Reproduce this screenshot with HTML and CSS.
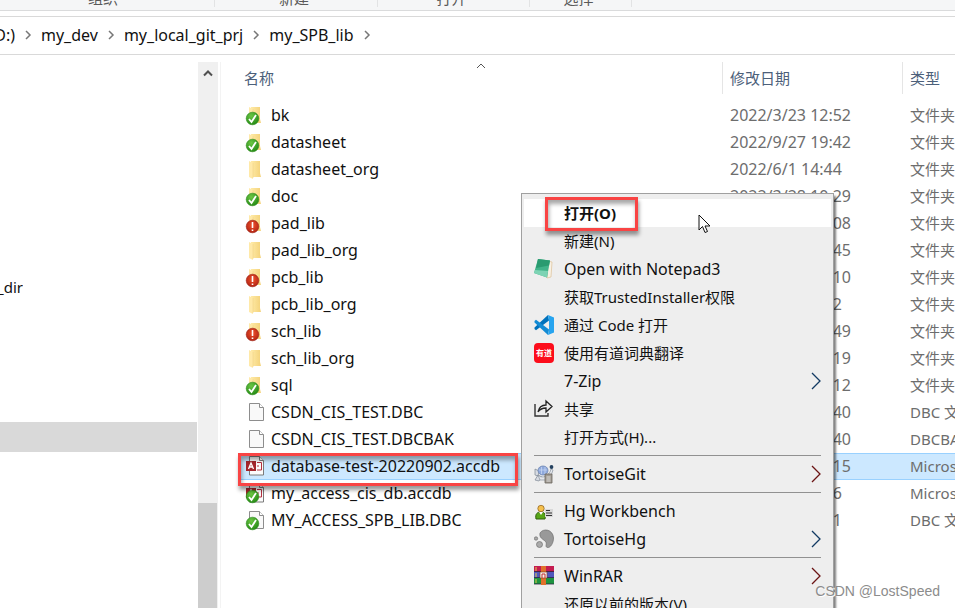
FILE: index.html
```html
<!DOCTYPE html>
<html lang="zh-CN">
<head>
    <meta charset="UTF-8">
    <meta name="viewport" content="width=device-width, initial-scale=1.0">
    <title>my_SPB_lib</title>
    <link rel="stylesheet" href="styles.css">
</head>
<body>
    <!-- shared icons -->
    <svg class="icon-defs" aria-hidden="true">
        <defs>
            <linearGradient id="folder-fill" x1="0" y1="0" x2="1" y2="0">
                <stop offset="0" stop-color="#ffeaa6"/>
                <stop offset="1" stop-color="#f3d27a"/>
            </linearGradient>
            <radialGradient id="green-fill" cx="0.4" cy="0.3" r="0.8">
                <stop offset="0" stop-color="#6cc644"/>
                <stop offset="1" stop-color="#1c8410"/>
            </radialGradient>
            <radialGradient id="red-fill" cx="0.5" cy="0.4" r="0.7">
                <stop offset="0" stop-color="#f0532c"/>
                <stop offset="1" stop-color="#a81c10"/>
            </radialGradient>
            <symbol id="folder" viewBox="0 0 24 27">
                <path d="M6 5h9v12l1 4H6z" fill="url(#folder-fill)"/>
                <path d="M4 5l4 2v16l-4-2z" fill="#ffe9a8"/>
                <path d="M8 7v15" stroke="#edcf7c" stroke-width="0.500"/>
            </symbol>
            <symbol id="page" viewBox="0 0 24 27">
                <path d="M4.500 4.500h10l4 4v13h-14z" fill="#f9f9f9" stroke="#8d8d8d"/>
                <path d="M14.500 4.500v4h4" fill="#fff" stroke="#8d8d8d"/>
            </symbol>
            <symbol id="access" viewBox="0 0 24 27">
                <path d="M4.500 3.500h10l4 4v14.500h-14z" fill="#fbfbfb" stroke="#7b7b7b"/>
                <path d="M14.500 3.500v4h4" fill="#fff" stroke="#7b7b7b"/>
                <path d="M12 9.500h4.500v7.500H12M12 13h2" fill="none" stroke="#b5303f"/>
                <path d="M1 8h10v10H1z" fill="#a4262c"/>
                <path d="M3.500 16L6 10l2.500 6M4.500 14h3" fill="none" stroke="#fff" stroke-width="1.300"/>
            </symbol>
            <symbol id="badge-ok" viewBox="0 0 24 27">
                <circle cx="7.500" cy="16.500" r="6.300" fill="url(#green-fill)" stroke="#2c8a1c" stroke-width="0.600"/>
                <path d="M4 17l2.500 3 4.500-7" fill="none" stroke="#fff" stroke-width="1.800"/>
            </symbol>
            <symbol id="badge-bad" viewBox="0 0 24 27">
                <circle cx="7.500" cy="16.500" r="6.300" fill="url(#red-fill)" stroke="#9c2016" stroke-width="0.600"/>
                <path d="M7.500 12v6M7.500 19.500v1.500" stroke="#fff" stroke-width="1.600"/>
            </symbol>
            <symbol id="chevron" viewBox="0 0 10 10">
                <path d="M3 1l4 4-4 4" fill="none" stroke="#777" stroke-width="1.500"/>
            </symbol>
            <symbol id="submenu" viewBox="0 0 10 18">
                <path d="M1 1l8 8-8 8" fill="none" stroke="currentColor" stroke-width="1.300"/>
            </symbol>
        </defs>
    </svg>

    <div class="ribbon">
        <div class="ribbon-group organize">组织</div>
        <div class="ribbon-group create">新建</div>
        <div class="ribbon-group open">打开</div>
        <div class="ribbon-group select">选择</div>
    </div>

    <nav class="address">
        <a class="drive" href="#">D:)</a>
        <svg class="chevron"><use href="#chevron"/></svg>
        <a href="#">my_dev</a>
        <svg class="chevron"><use href="#chevron"/></svg>
        <a href="#">my_local_git_prj</a>
        <svg class="chevron"><use href="#chevron"/></svg>
        <a href="#">my_SPB_lib</a>
        <svg class="chevron"><use href="#chevron"/></svg>
    </nav>

    <div class="explorer">
        <div class="tree">
            <a class="tree-item" href="#">_dir</a>
            <div class="tree-current"></div>
        </div>
        <div class="scrollbar">
            <svg class="scroll-up" viewBox="0 0 10 8"><path d="M1 6.500l4-4 4 4" fill="none" stroke="#505050" stroke-width="2"/></svg>
            <div class="thumb"></div>
        </div>

        <div class="files">
            <table class="file-table">
                <thead>
                    <tr>
                        <th class="col-name">
                            <div class="head">名称</div>
                            <svg class="sort" viewBox="0 0 10 6"><path d="M1 5l4-4 4 4" fill="none" stroke="#555"/></svg>
                        </th>
                        <th class="col-date"><div class="head">修改日期</div></th>
                        <th class="col-type"><div class="head">类型</div></th>
                    </tr>
                </thead>
                <tbody>
                    <tr>
                        <td><div class="name"><svg class="file-icon"><use href="#folder"/><use href="#badge-ok"/></svg>bk</div></td>
                        <td>2022/3/23 12:52</td>
                        <td>文件夹</td>
                    </tr>
                    <tr>
                        <td><div class="name"><svg class="file-icon"><use href="#folder"/><use href="#badge-ok"/></svg>datasheet</div></td>
                        <td>2022/9/27 19:42</td>
                        <td>文件夹</td>
                    </tr>
                    <tr>
                        <td><div class="name"><svg class="file-icon"><use href="#folder"/></svg>datasheet_org</div></td>
                        <td>2022/6/1 14:44</td>
                        <td>文件夹</td>
                    </tr>
                    <tr>
                        <td><div class="name"><svg class="file-icon"><use href="#folder"/><use href="#badge-ok"/></svg>doc</div></td>
                        <td>2022/3/28 10:29</td>
                        <td>文件夹</td>
                    </tr>
                    <tr>
                        <td><div class="name"><svg class="file-icon"><use href="#folder"/><use href="#badge-bad"/></svg>pad_lib</div></td>
                        <td>2022/9/27 20:08</td>
                        <td>文件夹</td>
                    </tr>
                    <tr>
                        <td><div class="name"><svg class="file-icon"><use href="#folder"/></svg>pad_lib_org</div></td>
                        <td>2022/5/31 14:45</td>
                        <td>文件夹</td>
                    </tr>
                    <tr>
                        <td><div class="name"><svg class="file-icon"><use href="#folder"/><use href="#badge-bad"/></svg>pcb_lib</div></td>
                        <td>2022/9/27 20:10</td>
                        <td>文件夹</td>
                    </tr>
                    <tr>
                        <td><div class="name"><svg class="file-icon"><use href="#folder"/></svg>pcb_lib_org</div></td>
                        <td>2022/6/1 14:42</td>
                        <td>文件夹</td>
                    </tr>
                    <tr>
                        <td><div class="name"><svg class="file-icon"><use href="#folder"/><use href="#badge-bad"/></svg>sch_lib</div></td>
                        <td>2022/9/27 19:49</td>
                        <td>文件夹</td>
                    </tr>
                    <tr>
                        <td><div class="name"><svg class="file-icon"><use href="#folder"/></svg>sch_lib_org</div></td>
                        <td>2022/5/31 15:19</td>
                        <td>文件夹</td>
                    </tr>
                    <tr>
                        <td><div class="name"><svg class="file-icon"><use href="#folder"/><use href="#badge-ok"/></svg>sql</div></td>
                        <td>2022/3/23 13:12</td>
                        <td>文件夹</td>
                    </tr>
                    <tr>
                        <td><div class="name"><svg class="file-icon"><use href="#page"/></svg>CSDN_CIS_TEST.DBC</div></td>
                        <td>2022/9/27 20:40</td>
                        <td>DBC 文件</td>
                    </tr>
                    <tr>
                        <td><div class="name"><svg class="file-icon"><use href="#page"/></svg>CSDN_CIS_TEST.DBCBAK</div></td>
                        <td>2022/9/27 20:40</td>
                        <td>DBCBAK 文件</td>
                    </tr>
                    <tr class="selected">
                        <td><div class="name"><svg class="file-icon"><use href="#access"/></svg>database-test-20220902.accdb</div></td>
                        <td>2022/9/27 20:15</td>
                        <td>Microsoft Access</td>
                    </tr>
                    <tr>
                        <td><div class="name"><svg class="file-icon"><use href="#access"/><use href="#badge-ok"/></svg>my_access_cis_db.accdb</div></td>
                        <td>2022/9/2 10:16</td>
                        <td>Microsoft Access</td>
                    </tr>
                    <tr>
                        <td><div class="name"><svg class="file-icon"><use href="#page"/><use href="#badge-ok"/></svg>MY_ACCESS_SPB_LIB.DBC</div></td>
                        <td>2022/9/2 10:11</td>
                        <td>DBC 文件</td>
                    </tr>
                </tbody>
            </table>
        </div>
    </div>

    <div class="mark mark-file"></div>

    <div class="menu">
        <button class="item active"><span class="icon"></span>打开(O)</button>
        <button class="item"><span class="icon"></span>新建(N)</button>
        <button class="item latin">
            <svg class="icon" viewBox="0 0 20 20">
                <path d="M14 2l4 1-1 15-4 1z" fill="#f8f1e4" stroke="#d9b98a" stroke-width="0.600"/>
                <path d="M4 0l12 1.500-3 17L0 14z" fill="#42b48a"/>
                <path d="M4 0l12 1.500-1 5L2 9z" fill="#2a9b70"/>
                <path d="M1 11l13 1-1 6.500L0 14z" fill="#7dd3b4"/>
            </svg>
            Open with Notepad3
        </button>
        <button class="item"><span class="icon"></span>获取TrustedInstaller权限</button>
        <button class="item">
            <svg class="icon" viewBox="0 0 20 20">
                <path d="M14 0L0.500 12.500v1.500L2 15.200l13-9.700z" fill="#0072bc"/>
                <path d="M14 20L0.500 7.500V6L2 4.800l13 9.700z" fill="#138bd4"/>
                <path d="M14 0l6 2.500v15L14 20l1-5V5z" fill="#27a4ef"/>
            </svg>
            通过 Code 打开
        </button>
        <button class="item"><span class="icon youdao">有道</span>使用有道词典翻译</button>
        <button class="item latin"><span class="icon"></span>7-Zip<svg class="arrow blue"><use href="#submenu"/></svg></button>
        <button class="item">
            <svg class="icon" viewBox="0 0 20 20">
                <path d="M1 5v12h13v-3" fill="none" stroke="#333" stroke-width="1.400"/>
                <path d="M4 13c1-5 3-7 8-7V2l6 5.500-6 5.500V9c-4 0-6 1-8 4z" fill="none" stroke="#222" stroke-width="1.300"/>
            </svg>
            共享
        </button>
        <button class="item"><span class="icon"></span>打开方式(H)...</button>
        <hr>
        <button class="item latin">
            <svg class="icon" viewBox="0 0 20 20">
                <path d="M1 5l4 2-1 5-3-1zM4 11l-3 5 4 1 3-4z" fill="#d7dbe2" stroke="#7d8794" stroke-width="0.700"/>
                <path d="M4 11c3 3 8 3 12-3l1-3 2 1-2 6-6 4H6z" fill="#e4e7ec" stroke="#8993a0" stroke-width="0.700"/>
                <ellipse cx="9" cy="6.500" rx="5" ry="4.500" fill="#8fa9dc" stroke="#6f86b3" stroke-width="0.800"/>
                <path d="M5 6h8M7.500 3v7M11 3v7" stroke="#c5d5f2" stroke-width="0.800"/>
                <circle cx="17.500" cy="3" r="1.900" fill="#24415f"/>
                <path d="M11 10h7v9h-7z" fill="#a09a92" stroke="#6a655e" stroke-width="0.800"/>
                <path d="M12.500 13h4M12.500 15h4M12.500 17h4" stroke="#eee" stroke-width="0.800"/>
            </svg>
            TortoiseGit<svg class="arrow red"><use href="#submenu"/></svg>
        </button>
        <hr>
        <button class="item latin">
            <svg class="icon" viewBox="0 0 20 20">
                <path d="M2 18c-1-5 1-7 5-7s5 3 4 7z" fill="#58a618" stroke="#2e5e0c"/>
                <path d="M5 11l2 3 2-3z" fill="#fff"/>
                <circle cx="7" cy="7.500" r="3.200" fill="#f5c04d" stroke="#8a5c1a" stroke-width="0.700"/>
                <path d="M11 8h8v8h-8z" fill="#d8d8d8"/>
                <path d="M12 9.500h4M12 12h6M12 14.500h6" stroke="#333" stroke-width="1.200"/>
            </svg>
            Hg Workbench
        </button>
        <button class="item latin">
            <svg class="icon" viewBox="0 0 20 20">
                <path d="M6 4c3-5 13-4 13.500 5 0 5-3 10-6 9.500-3-.5 0-4-2-6C9 10 5 9 6 4z" fill="#999" stroke="#6d6d6d" stroke-width="0.700"/>
                <circle cx="5.500" cy="15.500" r="3" fill="#aaa" stroke="#707070" stroke-width="0.700"/>
                <circle cx="2" cy="9.500" r="1.700" fill="#aaa" stroke="#707070" stroke-width="0.700"/>
            </svg>
            TortoiseHg<svg class="arrow blue"><use href="#submenu"/></svg>
        </button>
        <hr>
        <button class="item latin">
            <svg class="icon" viewBox="0 0 20 20">
                <path d="M0 0h20v6H0z" fill="#c41c50"/>
                <path d="M0 6h20v6H0z" fill="#4f58bd"/>
                <path d="M0 12h20v6H0z" fill="#1d9440"/>
                <path d="M0 5.500h20M0 11.500h20M0 18h20" stroke="#2c2540" stroke-width="0.800"/>
                <path d="M2 1v17" stroke="#e8c84a" stroke-dasharray="4 2"/>
                <path d="M7 0h5v19H7z" fill="#e0702a"/>
                <path d="M6 6h7v6H6z" fill="#f4f0ec" stroke="#864020" stroke-width="0.600"/>
                <path d="M8 12V8h3v4" fill="none" stroke="#c23030"/>
            </svg>
            WinRAR<svg class="arrow red"><use href="#submenu"/></svg>
        </button>
        <button class="item"><span class="icon"></span>还原以前的版本(V)</button>
    </div>

    <div class="mark mark-open"></div>

    <svg class="cursor" viewBox="0 0 13 20">
        <path d="M1 1v15l3.500-3.500L7 18.500l2.500-1L7 12h5z" fill="#fff" stroke="#111"/>
    </svg>

    <div class="watermark">CSDN @LostSpeed</div>
</body>
</html>
```
FILE: styles.css
```css
* {
    box-sizing: border-box;
}
body {
    margin: 0;
    height: 100vh;
    display: flex;
    flex-direction: column;
    position: relative;
    overflow: hidden;
    background: #fff;
    color: #111;
    font-family: "Noto Sans", "Noto Sans CJK SC", sans-serif;
    font-size: 15px;
}
a {
    color: inherit;
    text-decoration: none;
}
.icon-defs {
    position: absolute;
    width: 0;
    height: 0;
}

/* ribbon */
.ribbon {
    display: flex;
    flex: none;
    height: 11px;
    background: #f5f6f7;
    border-bottom: 1px solid #dadbdc;
    overflow: hidden;
}
.ribbon-group {
    display: flex;
    align-items: flex-end;
    justify-content: center;
    height: 7px;
    padding: 0 4px 1px 0;
    border-right: 1px solid #e2e3e4;
    color: #5a5a5a;
    line-height: 16px;
}
.organize {
    width: 215px;
    padding-right: 8px;
}
.create {
    width: 163px;
}
.open {
    width: 152px;
}
.select {
    width: 102px;
}

/* address bar */
.address {
    display: flex;
    align-items: center;
    flex: none;
    height: 39px;
    margin-top: 5px;
    padding-bottom: 2px;
    border-top: 1px solid #d9d9d9;
    border-bottom: 1px solid #d9d9d9;
    font-size: 16px;
}
.drive {
    display: flex;
    justify-content: flex-end;
    width: 15px;
    overflow: hidden;
}
.chevron {
    width: 10px;
    height: 10px;
    margin: 0 8px;
}

/* tree and scrollbar */
.explorer {
    display: flex;
    flex: 1;
    min-height: 0;
    padding-top: 7px;
}
.tree {
    display: grid;
    grid-auto-rows: 30px;
    width: 198px;
    padding-right: 1px;
}
.tree-item {
    grid-row: 8;
    display: flex;
    justify-content: flex-end;
    width: 23px;
    line-height: 30px;
    overflow: hidden;
}
.tree-current {
    grid-row: 13;
    background: #d9d9d9;
}
.scrollbar {
    display: flex;
    flex-direction: column;
    align-items: center;
    justify-content: space-between;
    width: 20px;
    background: #f0f0f0;
}
.scroll-up {
    width: 10px;
    height: 8px;
    margin-top: 7px;
}
.thumb {
    width: 100%;
    height: 105px;
    background: #cdcdcd;
    border-right: 1px solid #f0f0f0;
}

/* file list */
.files {
    flex: 1;
    min-width: 0;
    margin-left: 2px;
    padding-left: 18px;
    border-left: 1px solid #f3f3f3;
    overflow: hidden;
}
.file-table {
    width: 100%;
    table-layout: fixed;
    border-collapse: separate;
    border-spacing: 0;
}
.file-table th {
    position: relative;
    height: 40px;
    padding: 0;
    text-align: left;
    vertical-align: top;
    font-weight: normal;
    color: #4c607a;
}
.head {
    height: 32px;
    padding-left: 7px;
    line-height: 32px;
    border-left: 1px solid #e5e5e5;
}
.col-name .head {
    padding-left: 4px;
    border-left-color: transparent;
}
.col-date {
    width: 180px;
}
.col-type {
    width: 53px;
}
.sort {
    position: absolute;
    left: 0;
    right: 0;
    top: 1px;
    width: 10px;
    height: 6px;
    margin: 0 auto;
}
.file-table td {
    height: 27px;
    padding: 0 0 0 8px;
    font-size: 16px;
    line-height: 27px;
    color: #6d6d6d;
    white-space: nowrap;
    overflow: hidden;
}
.file-table td:first-child {
    padding: 0 0 0 6px;
    color: #111;
}
.file-table td:last-child {
    font-size: 15px;
}
.name {
    display: flex;
    align-items: center;
    gap: 2px;
}
.file-icon {
    width: 24px;
    height: 27px;
    flex: none;
}
.selected td {
    background: #cce8ff;
    box-shadow: inset 0 1px #99d1ff, inset 0 -1px #99d1ff;
}

/* context menu */
.menu {
    position: absolute;
    left: 521px;
    top: 193px;
    width: 313px;
    padding: 5px 2px;
    background: #eee;
    border: 1px solid #a0a0a0;
    box-shadow: 2px 3px 2px rgba(0, 0, 0, 0.5);
}
.item {
    display: flex;
    align-items: center;
    gap: 10px;
    width: 100%;
    height: 28px;
    padding: 0 10px;
    border: 0;
    background: none;
    color: #111;
    font: inherit;
    line-height: 20px;
    white-space: nowrap;
}
.item.latin {
    font-size: 16px;
}
.item.active {
    background: #fff;
    font-weight: bold;
}
.menu hr {
    margin: 4px 10px;
    border: 0;
    border-top: 1px solid #919191;
}
.icon {
    flex: none;
    width: 20px;
    height: 20px;
}
.youdao {
    border-radius: 4px;
    background: #fc0d1b;
    color: #fff;
    font-size: 8px;
    font-weight: bold;
    line-height: 20px;
    text-align: center;
}
.arrow {
    width: 10px;
    height: 18px;
    margin-left: auto;
}
.blue {
    color: #123a63;
}
.red {
    color: #6b1414;
}

/* annotations */
.mark {
    position: absolute;
    border: 3px solid #f94444;
    box-shadow: 1px 4px 4px rgba(0, 0, 0, 0.4), inset 1px 4px 4px rgba(0, 0, 0, 0.35);
}
.mark-file {
    left: 238px;
    top: 453px;
    width: 280px;
    height: 33px;
}
.mark-open {
    left: 545px;
    top: 197px;
    width: 93px;
    height: 34px;
}
.cursor {
    position: absolute;
    left: 698px;
    top: 214px;
    width: 13px;
    height: 20px;
}
.watermark {
    position: absolute;
    right: 15px;
    bottom: 8px;
    color: #8c8c8c;
    font-family: "Liberation Sans", sans-serif;
    font-size: 14px;
    line-height: 18px;
    text-shadow: 1px 1px #fff;
}
```
